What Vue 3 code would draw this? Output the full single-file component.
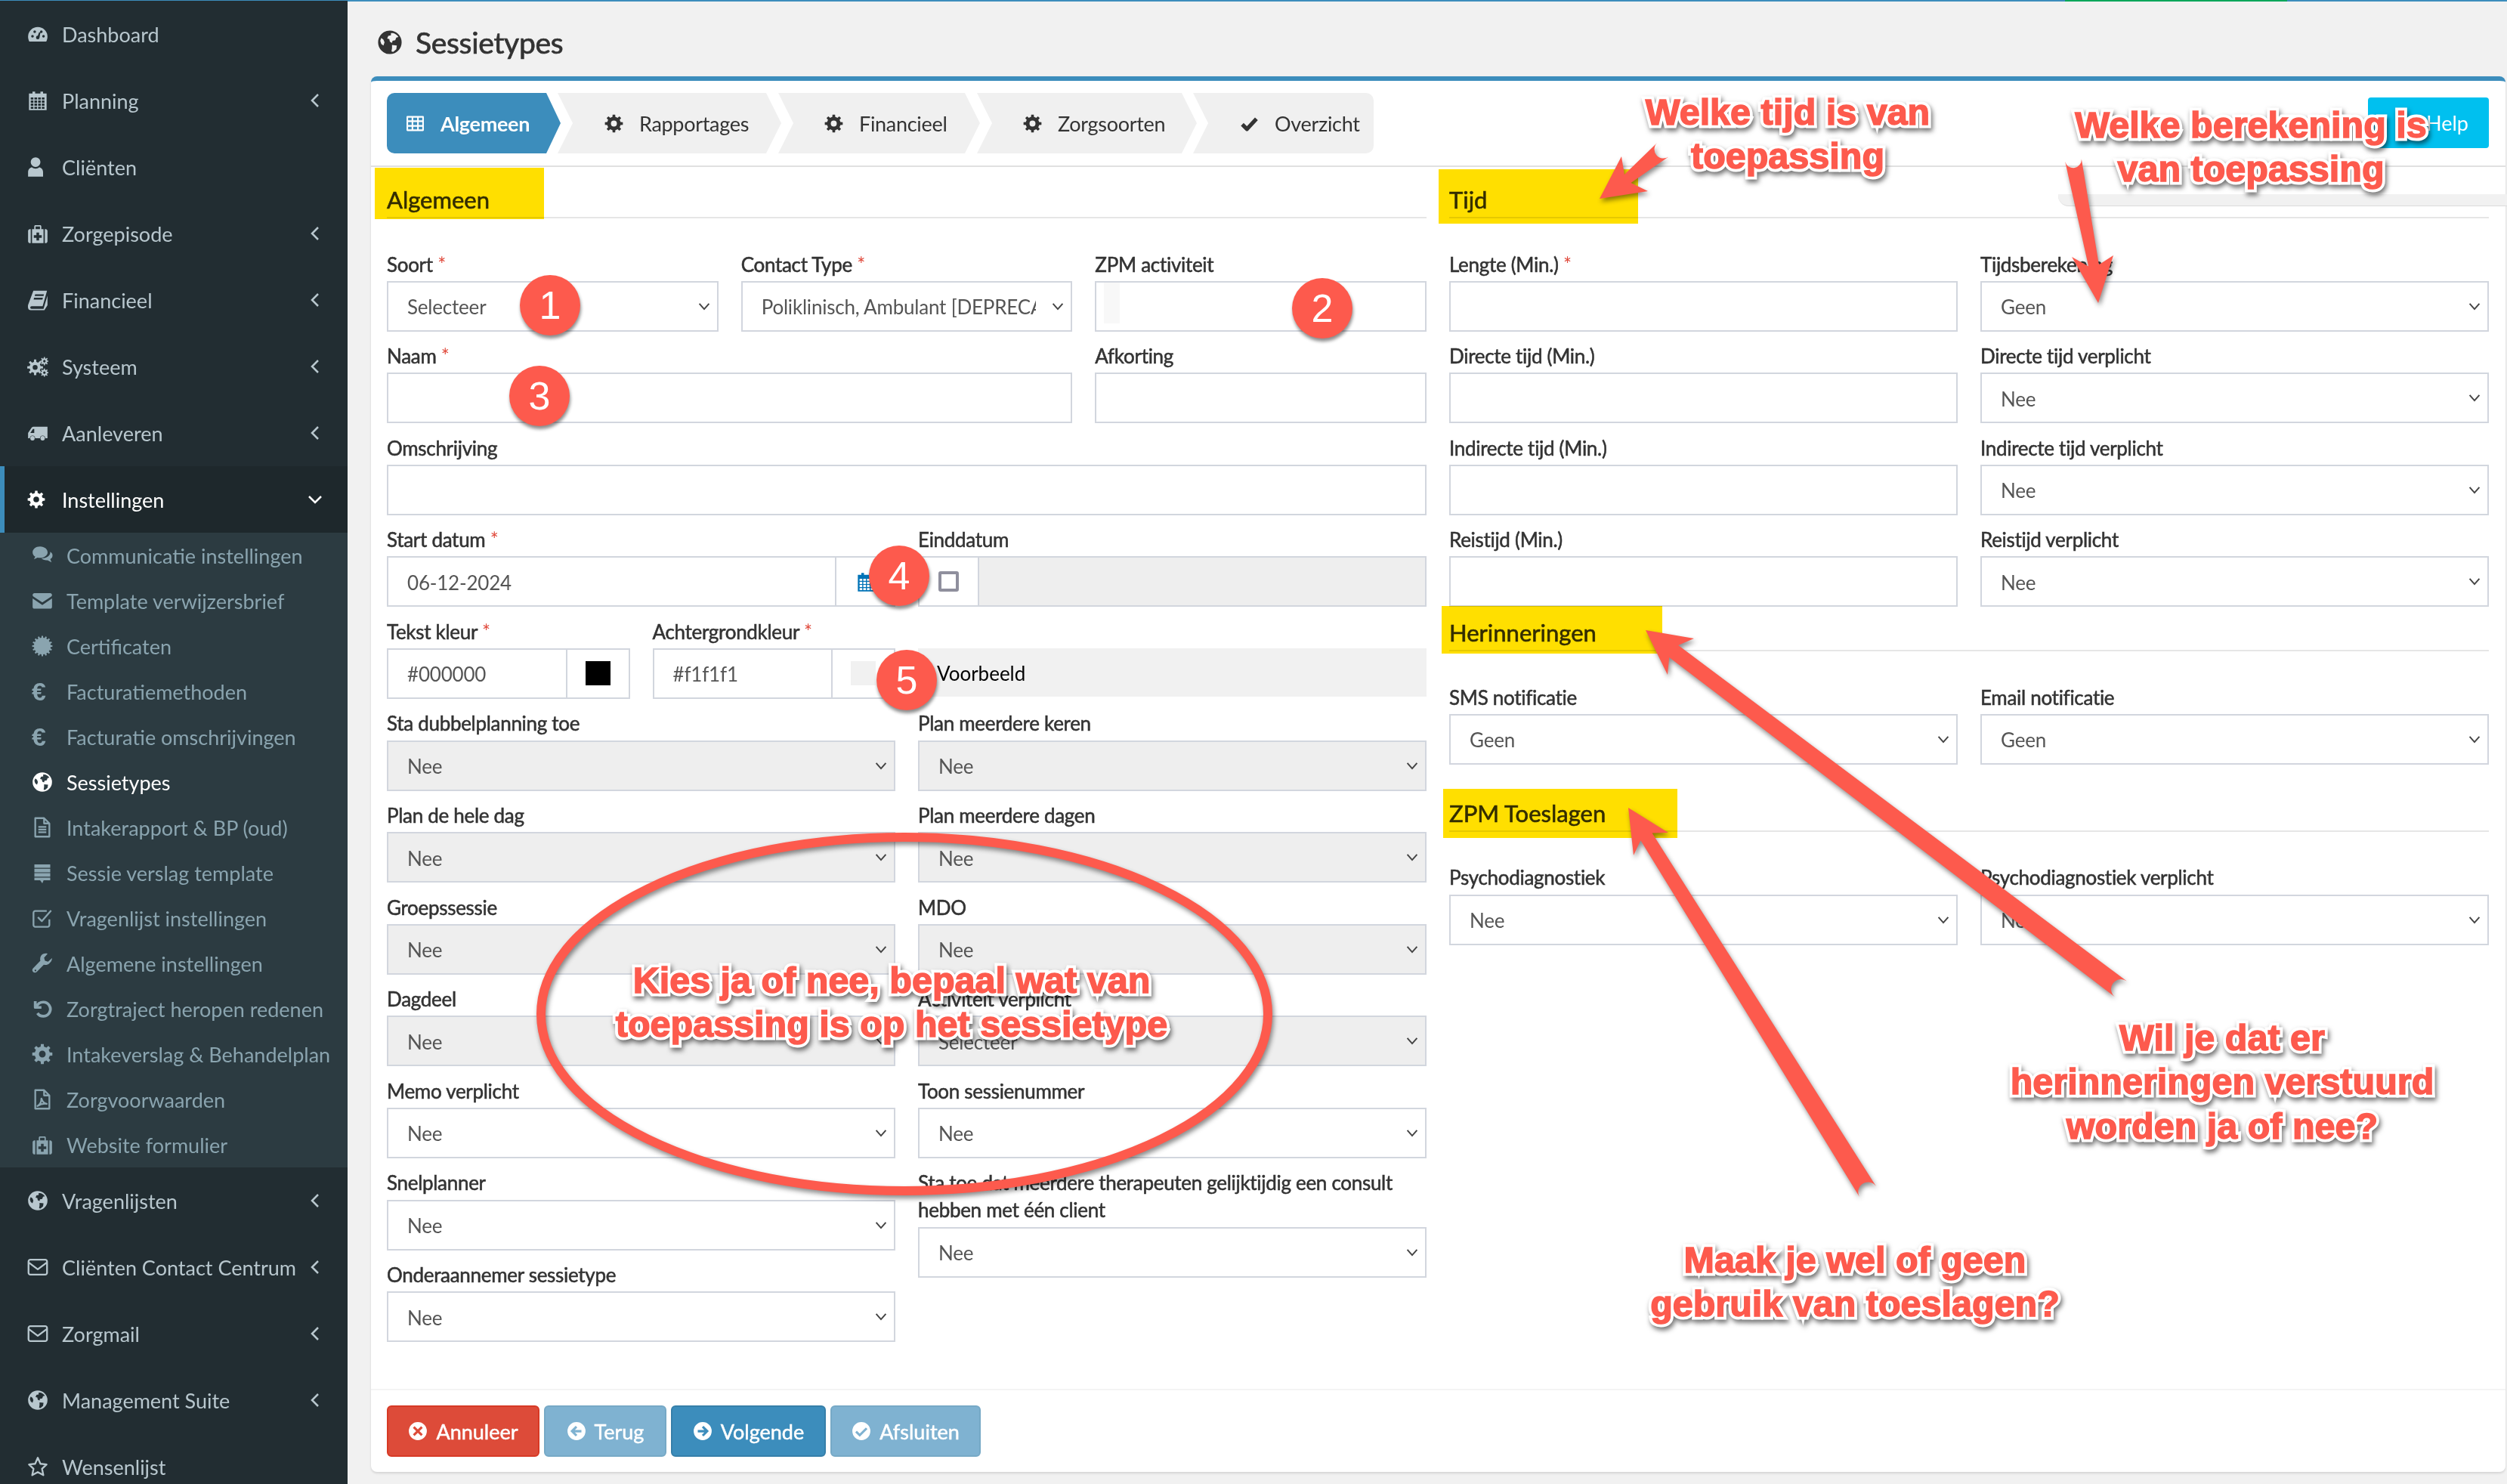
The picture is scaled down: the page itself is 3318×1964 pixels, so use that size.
<script setup>
function gear(cx, cy, R, r, teeth, hole) {
  let d = ''
  const step = (Math.PI * 2) / teeth
  for (let i = 0; i < teeth; i++) {
    const a = i * step
    const pts = [
      [r, a - step * 0.5], [r, a - step * 0.28], [R, a - step * 0.18], [R, a + step * 0.18], [r, a + step * 0.28]
    ]
    pts.forEach(([q, t], k) => {
      d += (i === 0 && k === 0 ? 'M' : 'L') + (cx + q * Math.cos(t)).toFixed(2) + ' ' + (cy + q * Math.sin(t)).toFixed(2)
    })
  }
  d += 'Z'
  if (hole) d += `M${cx - hole} ${cy}a${hole} ${hole} 0 1 0 ${hole * 2} 0a${hole} ${hole} 0 1 0 ${-hole * 2} 0Z`
  return d
}
const circle = 'M12 1a11 11 0 1 0 0 22a11 11 0 1 0 0-22Z'
const globe = circle + 'M13 3.500c2.500-.5 5.500 1 7 3.500l-2 .5-1 2.500-2.500.5-.5 2-2-1-.5-2.500-2-.5 1-2.500 2.500-.5ZM14 14.500l4.500.5-.5 3.500-3 2.500-1.500-.5.5-3ZM4 8l2 1.500 1 2.500-1 3-2-1.500-1-3Z'
const cal = () => {
  let d = 'M2 4h4V2h3v2h6V2h3v2h4v19H2Z'
  for (let r = 0; r < 4; r++) for (let c = 0; c < 4; c++) d += `M${4 + c * 4.2} ${8.500 + r * 3.500}h3v2.500h-3Z`
  return d
}
const icons = {
  dash: { d: 'M12 4A11 11 0 0 0 1 15c0 2 .5 3.800 1.400 5.500h19.200c.9-1.700 1.400-3.500 1.400-5.500A11 11 0 0 0 12 4ZM4.500 14.500a1.500 1.500 0 1 0 3 0a1.500 1.500 0 1 0-3 0ZM7 9.500a1.500 1.500 0 1 0 3 0a1.500 1.500 0 1 0-3 0ZM14.500 9.500a1.500 1.500 0 1 0 3 0a1.500 1.500 0 1 0-3 0ZM17 14.500a1.500 1.500 0 1 0 3 0a1.500 1.500 0 1 0-3 0ZM10 16a2 2 0 1 0 4 0l1-6h-1.500L12 14a2 2 0 0 0-2 2Z' },
  cal: { d: cal() },
  user: { d: 'M9.500 1a5.500 5.500 0 1 1 0 11a5.500 5.500 0 1 1 0-11ZM1 23v-5c0-3.500 2.500-5.500 4.500-5.500c1 .9 2.500 1.500 4 1.500s3-.6 4-1.500c2 0 4.500 2 4.500 5.500v5Z' },
  med: { d: 'M1 9c0-1 1-2 2-2h1v16H3c-1 0-2-1-2-2ZM20 7h1c1 0 2 1 2 2v12c0 1-1 2-2 2h-1ZM5.500 7H8V4c0-1 .5-1.500 1.500-1.500h5C15.500 2.500 16 3 16 4v3h2.500v16h-13ZM9.500 4v3h5V4ZM10.500 11v3h-3v3h3v3h3v-3h3v-3h-3v-3Z' },
  book: { d: 'M7 1.500h15.500l-5 17.500H5c-2 0-2 3 0 3h13.500l4.500-15v11l-3.500 5.500H4c-3 0-3.500-3-3-6ZM9 5.500l-.5 2h10l.5-2ZM7.800 9.500l-.5 2h10l.5-2Z' },
  cogs: { d: gear(9, 13, 9, 6.300, 8, 2.800) + gear(19.500, 6, 4.700, 3.300, 8, 1.400) + gear(19.500, 19, 4.700, 3.300, 8, 1.400) },
  truck: { d: 'M8 5h15v13h-2.500a3 3 0 0 0-6 0H9a3 3 0 0 0-6 0H1v-6l4-6c.5-.7 1.500-1 3-1ZM3.500 12H8V7.500H6.500ZM3.500 18a2.500 2.500 0 1 0 5 0a2.500 2.500 0 1 0-5 0ZM15 18a2.500 2.500 0 1 0 5 0a2.500 2.500 0 1 0-5 0Z' },
  gear: { d: gear(12, 12, 11.500, 8.600, 8, 3.800) },
  comments: { d: 'M9.500 2C4.500 2 1 5 1 8.500c0 2 1 3.800 3 5l-1.500 3 4-2c1 .2 2 .3 3 .3 5 0 8.500-3 8.500-6.300S14.500 2 9.500 2ZM21 8c2 1.200 3 3 2.500 5-.3 1.500-1.300 2.500-2.500 3.300l1.500 3.700-4.500-2.500c-3 .3-5.500-.5-7-2 5 0 10.500-2.500 10-7.500Z' },
  mail: { d: 'M1 5.500c0-1.200 1-2 2-2h18c1 0 2 .8 2 2 0 .8-.5 1.500-1.200 2L12 14 2.200 7.500C1.500 7 1 6.300 1 5.500ZM1 9.500l11 7.500 11-7.500V19c0 1.200-1 2-2 2H3c-1 0-2-.8-2-2Z' },
  cert: { d: gear(12, 12, 11.500, 9.500, 16, 0) },
  globe: { d: globe },
  file: { s: 1, d: 'M4 1.500h10l6 6v15H4ZM14 1.500v6h6M7.500 11.500h9M7.500 14.500h9M7.500 17.500h9' },
  list: { d: 'M3 2.500h18v4H3ZM3 7.500h18v4H3ZM3 12.500h18v4H3ZM3 17.500h18v3h-7.500L12 24l-2.500-3.500H3Z' },
  checko: { s: 1, d: 'M20 13.500V20c0 1-1 2-2 2H4c-1 0-2-1-2-2V6c0-1 1-2 2-2h13M7 11l4.500 4.500L22 3.500' },
  wrench: { d: 'M23 6l-4.500 4-3.500-1-1-3.500 4-4.500c-3-.8-6 .2-7.500 2.500-1 1.700-1.200 3.500-.7 5.500L1.500 17.500c-1.200 1.200-1.200 3 0 4.200s3 1.200 4.200 0l8-8.200c2.300.6 4.500.2 6.300-1.500 1.800-1.700 3.200-3.600 3-6ZM3.200 20a1 1 0 1 0 2 0a1 1 0 1 0-2 0Z' },
  undo: { s: 1, w: 3.200, d: 'M4 3.500v7h7M5 10c1.800-3.500 5-5.500 8-5.500a8 8 0 1 1-6.500 12.500' },
  pdf: { s: 1, d: 'M4 1.500h10l6 6v15H4ZM14 1.500v6h6M6.500 19.500c3-1.500 4.500-5 4.500-8.500 1 3.500 3 5.500 6 6-3.500-.5-7.500 .5-10.500 2.500Z' },
  mailo: { s: 1, d: 'M1.500 5.500c0-1 1-2 2-2h17c1 0 2 1 2 2v13c0 1-1 2-2 2h-17c-1 0-2-1-2-2ZM2 7l10 7.500L22 7' },
  star: { s: 1, d: 'M12 2l3 6.800 7 .8-5.200 4.800 1.500 7.300L12 18.200l-6.300 3.500 1.500-7.300L2 9.600l7-.8Z' },
  table: { s: 1, d: 'M2 3.500h20v17H2ZM2 9h20M2 15h20M8.500 3.500v17M15.500 3.500v17' },
  check: { s: 1, w: 5, d: 'M3 13l6 6L21 6' },
  x: { d: circle + 'M8 6l-2 2 4 4-4 4 2 2 4-4 4 4 2-2-4-4 4-4-2-2-4 4Z' },
  back: { d: circle + 'M11 5.500l-6.500 6.500 6.500 6.500 2-2-3-3h8v-3h-8l3-3Z' },
  next: { d: circle + 'M13 5.500l6.500 6.500-6.500 6.500-2-2 3-3H6v-3h8l-3-3Z' },
  ok: { d: circle + 'M6.500 11.500l-2 2 5.500 5.500 9.500-9.500-2-2-7.500 7.500Z' }
}

const mainTop = [
  { t: 'Dashboard', i: 'dash' },
  { t: 'Planning', i: 'cal', c: 1 },
  { t: 'Cliënten', i: 'user' },
  { t: 'Zorgepisode', i: 'med', c: 1 },
  { t: 'Financieel', i: 'book', c: 1 },
  { t: 'Systeem', i: 'cogs', c: 1 },
  { t: 'Aanleveren', i: 'truck', c: 1 }
]
const sub = [
  { t: 'Communicatie instellingen', i: 'comments' },
  { t: 'Template verwijzersbrief', i: 'mail' },
  { t: 'Certificaten', i: 'cert' },
  { t: 'Facturatiemethoden', e: 1 },
  { t: 'Facturatie omschrijvingen', e: 1 },
  { t: 'Sessietypes', i: 'globe', a: 1 },
  { t: 'Intakerapport & BP (oud)', i: 'file' },
  { t: 'Sessie verslag template', i: 'list' },
  { t: 'Vragenlijst instellingen', i: 'checko' },
  { t: 'Algemene instellingen', i: 'wrench' },
  { t: 'Zorgtraject heropen redenen', i: 'undo' },
  { t: 'Intakeverslag & Behandelplan', i: 'gear' },
  { t: 'Zorgvoorwaarden', i: 'pdf' },
  { t: 'Website formulier', i: 'med' }
]
const mainBottom = [
  { t: 'Vragenlijsten', i: 'globe', c: 1 },
  { t: 'Cliënten Contact Centrum', i: 'mailo', c: 1 },
  { t: 'Zorgmail', i: 'mailo', c: 1 },
  { t: 'Management Suite', i: 'globe', c: 1 },
  { t: 'Wensenlijst', i: 'star' }
]
const tabs = [
  { t: 'Algemeen', i: 'table', cls: 'first active' },
  { t: 'Rapportages', i: 'gear', cls: 'rap' },
  { t: 'Financieel', i: 'gear', cls: 'fin' },
  { t: 'Zorgsoorten', i: 'gear', cls: 'zor' },
  { t: 'Overzicht', i: 'check', cls: 'last' }
]
const sel = (label, value, s = 6, extra = {}) => ({ k: 'select', label, value, s, ...extra })
const inp = (label, s = 6, extra = {}) => ({ k: 'input', label, s, ...extra })
const panels = [
  [
    { k: 'head', label: 'Algemeen' },
    sel('Soort', 'Selecteer', 4, { req: 1 }),
    sel('Contact Type', 'Poliklinisch, Ambulant [DEPRECATED]', 4, { req: 1 }),
    inp('ZPM activiteit', 4, { ghost: 1 }),
    inp('Naam', 8, { req: 1 }),
    inp('Afkorting', 4),
    inp('Omschrijving', 12),
    { k: 'date', label: 'Start datum', req: 1, s: 6, value: '06-12-2024' },
    { k: 'end', label: 'Einddatum', s: 6 },
    { k: 'color', label: 'Tekst kleur', req: 1, s: 3, value: '#000000', sw: '#000000' },
    { k: 'color', label: 'Achtergrondkleur', req: 1, s: 3, value: '#f1f1f1', sw: '#f1f1f1' },
    { k: 'preview', label: '\u00a0', s: 6, value: 'Voorbeeld' },
    sel('Sta dubbelplanning toe', 'Nee', 6, { dis: 1 }),
    sel('Plan meerdere keren', 'Nee', 6, { dis: 1 }),
    sel('Plan de hele dag', 'Nee', 6, { dis: 1 }),
    sel('Plan meerdere dagen', 'Nee', 6, { dis: 1 }),
    sel('Groepssessie', 'Nee', 6, { dis: 1 }),
    sel('MDO', 'Nee', 6, { dis: 1 }),
    sel('Dagdeel', 'Nee', 6, { dis: 1 }),
    sel('Activiteit verplicht', 'Selecteer', 6, { dis: 1 }),
    sel('Memo verplicht', 'Nee'),
    sel('Toon sessienummer', 'Nee'),
    sel('Snelplanner', 'Nee'),
    sel('Sta toe dat meerdere therapeuten gelijktijdig een consult hebben met één client', 'Nee', 6, { tall: 1 }),
    sel('Onderaannemer sessietype', 'Nee')
  ],
  [
    { k: 'head', label: 'Tijd' },
    inp('Lengte (Min.)', 6, { req: 1 }),
    sel('Tijdsberekening', 'Geen'),
    inp('Directe tijd (Min.)'),
    sel('Directe tijd verplicht', 'Nee'),
    inp('Indirecte tijd (Min.)'),
    sel('Indirecte tijd verplicht', 'Nee'),
    inp('Reistijd (Min.)'),
    sel('Reistijd verplicht', 'Nee'),
    { k: 'head', label: 'Herinneringen' },
    sel('SMS notificatie', 'Geen'),
    sel('Email notificatie', 'Geen'),
    { k: 'head', label: 'ZPM Toeslagen', cls: 'zpm' },
    sel('Psychodiagnostiek', 'Nee'),
    sel('Psychodiagnostiek verplicht', 'Nee')
  ]
]
const buttons = [
  { t: 'Annuleer', i: 'x', cls: 'red' },
  { t: 'Terug', i: 'back', cls: 'pale' },
  { t: 'Volgende', i: 'next', cls: 'blue' },
  { t: 'Afsluiten', i: 'ok', cls: 'pale' }
]
const yellows = [
  [496, 222, 224, 68],
  [1904, 224, 264, 72],
  [1908, 802, 292, 63],
  [1910, 1044, 310, 65]
]
const box = (a) => ({ left: a[0] + 'px', top: a[1] + 'px', width: a[2] + 'px', height: a[3] + 'px' })
const badges = [
  { n: 1, x: 728, y: 404 }, { n: 2, x: 1750, y: 408 }, { n: 3, x: 714, y: 524 },
  { n: 4, x: 1190, y: 762 }, { n: 5, x: 1200, y: 900 }
]
const notes = [
  { x: 2366, y: 148, l: ['Welke tijd is van', 'toepassing'] },
  { x: 2979, y: 165, l: ['Welke berekening is', 'van toepassing'] },
  { x: 1180, y: 1297, l: ['Kies ja of nee, bepaal wat van', 'toepassing is op het sessietype'] },
  { x: 2941, y: 1373, l: ['Wil je dat er', 'herinneringen verstuurd', 'worden ja of nee?'] },
  { x: 2455, y: 1667, l: ['Maak je wel of geen', 'gebruik van toeslagen?'] }
]
function arrow(tail, tip, w1, w2, tw, nw) {
  const len = Math.hypot(tip[0] - tail[0], tip[1] - tail[1])
  const u = [(tip[0] - tail[0]) / len, (tip[1] - tail[1]) / len]
  const n = [-u[1], u[0]]
  const side = (w) => (w[0] - tip[0]) * n[0] + (w[1] - tip[1]) * n[1]
  const [wa, wb] = side(w1) > 0 ? [w1, w2] : [w2, w1]
  const mid = [(w1[0] + w2[0]) / 2, (w1[1] + w2[1]) / 2]
  const neck = [tip[0] + (mid[0] - tip[0]) * 0.8, tip[1] + (mid[1] - tip[1]) * 0.8]
  const p = (c, s, w) => (c[0] + n[0] * s * w / 2).toFixed(1) + ' ' + (c[1] + n[1] * s * w / 2).toFixed(1)
  return `M${p(tail, 1, tw)}L${p(neck, 1, nw)}L${wa[0]} ${wa[1]}L${tip[0]} ${tip[1]}L${wb[0]} ${wb[1]}L${p(neck, -1, nw)}L${p(tail, -1, tw)}A${tw / 2} ${tw / 2} 0 0 1 ${p(tail, 1, tw)}Z`
}
const arrows = [
  arrow([2201, 198], [2117, 263], [2146, 207], [2181, 253], 24, 14),
  arrow([2744, 212], [2777, 401], [2742, 340], [2797, 338], 22, 14),
  arrow([2807, 1309], [2178, 834], [2207, 893], [2242, 845], 26, 20),
  arrow([2472, 1577], [2155, 1069], [2162, 1132], [2208, 1102], 26, 18)
]
</script>

<template>
  <div class="app">
    <div class="topline"></div>
    <div class="shell">
      <aside class="sidebar">
        <a v-for="m in mainTop" :key="m.t" class="item">
          <span class="ico"><svg viewBox="0 0 24 24" :class="{ st: icons[m.i].s }" :style="icons[m.i].w ? { strokeWidth: icons[m.i].w } : null"><path :d="icons[m.i].d" /></svg></span>
          <span class="txt">{{ m.t }}</span>
          <svg v-if="m.c" class="caret" viewBox="0 0 14 20"><path d="M11 2L3 10l8 8" /></svg>
        </a>
        <a class="item active">
          <span class="ico gearbox"><svg viewBox="0 0 24 24"><path :d="icons.gear.d" /></svg></span>
          <span class="txt">Instellingen</span>
          <svg class="caret down" viewBox="0 0 20 14"><path d="M2 3l8 8 8-8" /></svg>
        </a>
        <div class="submenu">
          <a v-for="s in sub" :key="s.t" class="subitem" :class="{ on: s.a }">
            <span class="ico"><span v-if="s.e" class="euro">€</span><svg v-else viewBox="0 0 24 24" :class="{ st: icons[s.i].s }" :style="icons[s.i].w ? { strokeWidth: icons[s.i].w } : null"><path :d="icons[s.i].d" /></svg></span>
            <span class="txt">{{ s.t }}</span>
          </a>
        </div>
        <a v-for="m in mainBottom" :key="m.t" class="item">
          <span class="ico"><svg viewBox="0 0 24 24" :class="{ st: icons[m.i].s }"><path :d="icons[m.i].d" /></svg></span>
          <span class="txt">{{ m.t }}</span>
          <svg v-if="m.c" class="caret" viewBox="0 0 14 20"><path d="M11 2L3 10l8 8" /></svg>
        </a>
      </aside>

      <main class="content">
        <header class="pagehead">
          <svg viewBox="0 0 24 24" class="headico"><path :d="icons.globe.d" /></svg>
          <h1>Sessietypes</h1>
        </header>
        <section class="card">
          <div class="tabbar">
            <nav class="tabs">
              <a v-for="t in tabs" :key="t.t" class="tab" :class="t.cls">
                <svg viewBox="0 0 24 24" :class="{ st: icons[t.i].s }" :style="icons[t.i].w ? { strokeWidth: icons[t.i].w } : null"><path :d="icons[t.i].d" /></svg>
                <span>{{ t.t }}</span>
              </a>
            </nav>
            <a class="help">Help</a>
          </div>
          <div class="panels">
            <div v-for="(p, pi) in panels" :key="pi" class="panel">
              <template v-for="it in p" :key="it.label">
                <h4 v-if="it.k === 'head'" class="head" :class="it.cls">{{ it.label }}</h4>
                <div v-else class="field" :class="['s' + it.s, { tall: it.tall }]">
                  <label>{{ it.label }}<span v-if="it.req" class="req"> *</span></label>
                  <div v-if="it.k === 'select'" class="selwrap">
                    <select :disabled="!!it.dis"><option>{{ it.value }}</option></select>
                    <svg class="chev" viewBox="0 0 20 14"><path d="M2 2.500l8 9 8-9" /></svg>
                  </div>
                  <div v-else-if="it.k === 'input'" class="ctl-wrap">
                    <input class="ctl" type="text" />
                    <span v-if="it.ghost" class="ghost"></span>
                  </div>
                  <div v-else-if="it.k === 'date'" class="group">
                    <input class="ctl" type="text" :value="it.value" />
                    <span class="addon date">
                      <svg viewBox="0 0 24 24" class="calico"><path :d="icons.cal.d" /></svg>
                    </span>
                  </div>
                  <div v-else-if="it.k === 'end'" class="group">
                    <span class="addon chk"><span class="box"></span></span>
                    <input class="ctl" type="text" disabled />
                  </div>
                  <div v-else-if="it.k === 'color'" class="group">
                    <input class="ctl" type="text" :value="it.value" />
                    <span class="addon swatchbox"><i class="swatch" :style="{ background: it.sw }"></i></span>
                  </div>
                  <div v-else class="preview">{{ it.value }}</div>
                </div>
              </template>
            </div>
          </div>
          <footer class="foot">
            <button v-for="b in buttons" :key="b.t" type="button" class="btn" :class="b.cls">
              <svg viewBox="0 0 24 24"><path :d="icons[b.i].d" /></svg>{{ b.t }}
            </button>
          </footer>
        </section>
      </main>
    </div>

    <div class="overlay">
      <div class="band"></div>
      <div v-for="(y, i) in yellows" :key="i" class="yellow" :style="box(y)"></div>
      <svg class="draw" viewBox="0 0 3318 1964">
        <ellipse cx="1197" cy="1342" rx="481" ry="234" class="ring" />
        <path v-for="(d, i) in arrows" :key="i" :d="d" class="arr" />
      </svg>
      <div v-for="b in badges" :key="b.n" class="badge" :style="{ left: b.x - 40 + 'px', top: b.y - 40 + 'px' }">{{ b.n }}</div>
      <div v-for="(n, i) in notes" :key="i" class="note" :style="{ left: n.x + 'px', top: n.y - 29.500 + 'px' }">
        <div v-for="l in n.l" :key="l" class="line" :data-t="l">{{ l }}</div>
      </div>
    </div>
  </div>
</template>

<style>
html, body { margin: 0; overflow: hidden; background: #f1f1f1; }
</style>

<style scoped>
.app {
  position: relative;
  width: 3318px;
  height: 1964px;
  overflow: hidden;
  background: #f1f1f1;
  font-family: Lato, "Noto Sans", sans-serif;
  color: #333;
}
svg path { fill-rule: evenodd; }
.topline {
  height: 2px;
  background: linear-gradient(90deg, #3c8dbc 2733px, #00a65a 2733px, #00a65a 3027px, #3c8dbc 3027px);
}
.shell { display: flex; height: 1962px; }
.sidebar {
  width: 460px;
  flex: none;
  background: #222d32;
  overflow: hidden;
  margin-top: -1px;
}
.item {
  display: flex;
  align-items: center;
  height: 88px;
  padding-left: 36px;
  color: #b8c7ce;
  font-size: 27px;
  box-sizing: border-box;
  position: relative;
}
.item .ico { width: 45px; flex: none; display: flex; margin-right: 1px; }
.ico svg { width: 28px; height: 28px; fill: currentColor; display: block; }
.ico svg.st, .tab svg.st {
  fill: none;
  stroke: currentColor;
  stroke-width: 2;
  stroke-linejoin: round;
}
.txt { white-space: nowrap; }
.caret {
  position: absolute;
  right: 36px;
  top: 34px;
  width: 14px;
  height: 20px;
  fill: none;
  stroke: currentColor;
  stroke-width: 2.500;
}
.caret.down { width: 20px; height: 14px; right: 33px; top: 37px; }
.item.active {
  background: #1e282c;
  color: #fff;
  border-left: 6px solid #3c8dbc;
  padding-left: 30px;
}
.gearbox svg { width: 24px; height: 24px; }
.submenu { background: #2c3b41; padding: 0; }
.subitem {
  display: flex;
  align-items: center;
  height: 60px;
  padding-left: 42px;
  color: #8aa4af;
  font-size: 27px;
  box-sizing: border-box;
}
.subitem .ico { width: 46px; flex: none; display: flex; }
.subitem.on { color: #fff; }
.euro { font-size: 34px; font-weight: 700; line-height: 28px; font-family: "Liberation Sans", sans-serif; }

.content { flex: 1; min-width: 0; display: flex; flex-direction: column; }
.pagehead {
  height: 99px;
  display: flex;
  align-items: center;
  padding-left: 39px;
  gap: 17px;
  flex: none;
  padding-top: 8px;
  box-sizing: border-box;
}
.headico { width: 34px; height: 34px; fill: #333; }
.pagehead h1 {
  margin: 0;
  font-size: 39px;
  font-weight: 400;
  color: #333;
  letter-spacing: -0.3px;
  -webkit-text-stroke: 0.7px #333;
}
.card {
  margin: 0 2px 16px 31px;
  flex: 1;
  background: #fff;
  border-top: 6px solid #3c8dbc;
  border-radius: 8px;
  box-shadow: 0 2px 3px rgba(0,0,0,.12);
  display: flex;
  flex-direction: column;
  min-height: 0;
}
.tabbar {
  flex: none;
  height: 114px;
  box-sizing: border-box;
  border-bottom: 2px solid #e0e0e0;
  padding: 16px 22px 0 21px;
  display: flex;
  justify-content: space-between;
  align-items: flex-start;
}
.tabs { display: flex; height: 80px; }
.tab {
  display: flex;
  align-items: center;
  height: 80px;
  background: #f0f0f0;
  color: #333;
  font-size: 27px;
  letter-spacing: -0.3px;
  box-sizing: border-box;
  clip-path: polygon(0 0, calc(100% - 20px) 0, 100% 50%, calc(100% - 20px) 100%, 0 100%, 20px 50%);
  gap: 21px;
}
.tab svg { width: 25px; height: 25px; fill: currentColor; flex: none; }
.tab.first {
  width: 230px;
  padding-left: 25px;
  gap: 21px;
  background: #3c8dbc;
  color: #fff;
  font-weight: 700;
  border-radius: 10px 0 0 10px;
  clip-path: polygon(0 0, calc(100% - 19px) 0, 100% 50%, calc(100% - 19px) 100%, 0 100%);
}
.tab.rap { width: 296px; margin-left: -4px; padding-left: 62px; }
.tab.fin { width: 267px; margin-left: -4px; padding-left: 61px; }
.tab.zor { width: 291px; margin-left: -4px; padding-left: 61px; }
.tab.last {
  width: 239px;
  margin-left: -5px;
  padding-left: 62px;
  border-radius: 0 10px 10px 0;
  clip-path: polygon(0 0, 100% 0, 100% 100%, 0 100%, 20px 50%);
}
.help {
  width: 160px;
  height: 67px;
  margin-top: 6px;
  background: #00c0ef;
  color: #fff;
  border-radius: 4px;
  font-size: 27px;
  display: flex;
  align-items: center;
  justify-content: flex-end;
  padding-right: 27px;
  box-sizing: border-box;
}
.panels {
  flex: 1;
  display: grid;
  grid-template-columns: 1376px 1376px;
  column-gap: 30px;
  padding: 22px 22px 0 21px;
  align-content: start;
}
.panel {
  display: grid;
  grid-template-columns: repeat(12, 1fr);
  column-gap: 30px;
  align-content: start;
}
.head {
  grid-column: span 12;
  margin: 0 0 41px;
  height: 46px;
  padding-top: 1px;
  box-sizing: border-box;
  line-height: 40px;
  font-size: 31px;
  font-weight: 400;
  -webkit-text-stroke: 0.6px #333;
  color: #333;
  border-bottom: 2px solid #e6e6e6;
}
.head.zpm { margin-top: 30px; }
.field { margin-bottom: 13px; min-width: 0; }
.s3 { grid-column: span 3; }
.s4 { grid-column: span 4; }
.s6 { grid-column: span 6; }
.s8 { grid-column: span 8; }
.s12 { grid-column: span 12; }
.tall { grid-row: span 2; }
label {
  display: block;
  padding-top: 1.500px;
  line-height: 36px;
  margin-bottom: 4.100px;
  font-size: 26px;
  font-weight: 400;
  color: #333;
  letter-spacing: -0.3px;
  -webkit-text-stroke: 0.55px #333;
}
.req { color: #e0483a; font-weight: 400; -webkit-text-stroke: 0; }
.ctl, select {
  display: block;
  width: 100%;
  height: 67px;
  box-sizing: border-box;
  border: 2px solid #d2d6de;
  border-radius: 0;
  background: #fff;
  padding: 2px 46px 0 25px;
  font: inherit;
  font-size: 26px;
  letter-spacing: -0.2px;
  color: #555;
  outline: none;
  appearance: none;
}
.ctl { padding-right: 25px; flex: 1; min-width: 0; }
.ctl:disabled, select:disabled { background: #eee; opacity: 1; color: #555; }
.selwrap, .ctl-wrap { position: relative; }
.chev {
  position: absolute;
  right: 11px;
  top: 27px;
  width: 16px;
  height: 13px;
  fill: none;
  stroke: #444;
  stroke-width: 2.500;
}
.ghost {
  position: absolute;
  left: 12px;
  top: 2px;
  width: 21px;
  height: 54px;
  background: #f8f8f8;
}
.group { display: flex; height: 67px; }
.addon {
  flex: none;
  box-sizing: border-box;
  border: 2px solid #d2d6de;
  display: flex;
  align-items: center;
  background: #fff;
}
.addon.date { width: 78px; border-left: 0; padding-left: 26px; }
.calico { width: 28px; height: 28px; fill: #0073b7; }
.addon.chk { width: 79px; border-right: 0; justify-content: center; }
.box {
  width: 27px;
  height: 27px;
  box-sizing: border-box;
  border: 4px solid #8f8f9d;
  border-radius: 3px;
  background: #fff;
}
.swatchbox { width: 83px; border-left: 0; justify-content: center; }
.swatch { display: block; width: 33px; height: 32px; }
.preview {
  height: 64px;
  margin-top: 2px;
  background: #f1f1f1;
  color: #000;
  font-size: 26px;
  line-height: 66px;
  padding-left: 25px;
}
.foot {
  flex: none;
  height: 110px;
  box-sizing: border-box;
  border-top: 2px solid #f4f4f4;
  padding: 20px 0 0 21px;
  display: flex;
  gap: 6px;
}
.btn {
  height: 68px;
  border-radius: 6px;
  border: 2px solid transparent;
  color: #fff;
  font: inherit;
  font-size: 27px;
  font-weight: 400;
  -webkit-text-stroke: 0.5px #fff;
  display: flex;
  align-items: center;
  justify-content: center;
  gap: 11px;
  padding: 0;
}
.btn svg { width: 26px; height: 26px; fill: #fff; }
.btn:nth-child(1) { width: 202px; }
.btn:nth-child(2) { width: 162px; }
.btn:nth-child(3) { width: 205px; }
.btn:nth-child(4) { width: 199px; }
.red { background: #dd4b39; border-color: #d73925; }
.blue { background: #3c8dbc; border-color: #367fa9; }
.pale { background: #7fb2d1; border-color: #76a9c6; }

.overlay { position: absolute; inset: 0; pointer-events: none; }
.band {
  position: absolute;
  left: 2724px;
  top: 257px;
  width: 594px;
  height: 15px;
  background: #f1f1f1;
  border-bottom: 1px solid #dcdcdc;
  border-bottom-left-radius: 14px;
}
.yellow {
  position: absolute;
  background: #ffdf00;
  mix-blend-mode: multiply;
}
.draw {
  position: absolute;
  left: 0;
  top: 0;
  width: 3318px;
  height: 1964px;
  filter: drop-shadow(2px 4px 3px rgba(0,0,0,.45));
}
.ring { fill: none; stroke: #fd5a4d; stroke-width: 12; }
.arr { fill: #fd5a4d; }
.badge {
  position: absolute;
  width: 80px;
  height: 80px;
  border-radius: 50%;
  background: #fd5a4d;
  color: #fff;
  font-family: "Liberation Sans", Arial, sans-serif;
  font-size: 52px;
  line-height: 80px;
  text-align: center;
  box-shadow: 1px 4px 4px rgba(0,0,0,.45);
}
.note {
  position: absolute;
  transform: translateX(-50%);
  text-align: center;
  white-space: nowrap;
  font-family: "Liberation Sans", Arial, sans-serif;
  font-weight: 700;
  font-size: 48.500px;
  line-height: 58.500px;
  color: #fd5a4d;
  -webkit-text-stroke: 9px #fff;
  paint-order: stroke fill;
  filter: drop-shadow(2px 4px 3px rgba(0,0,0,.55));
}
.line { position: relative; }
.line::after {
  content: attr(data-t);
  position: absolute;
  inset: 0;
  -webkit-text-stroke: 1.500px #fd5a4d;
}
</style>
